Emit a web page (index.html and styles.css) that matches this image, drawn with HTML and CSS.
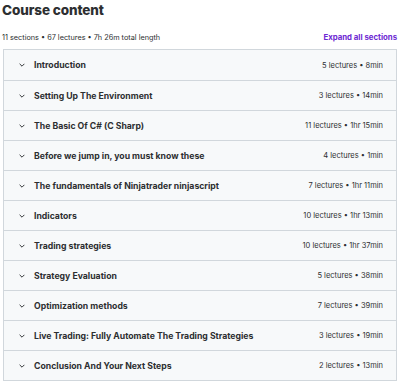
FILE: index.html
```html
<!DOCTYPE html>
<html lang="en">
	<head>
		<meta charset="utf-8">
		<title>Course content</title>
		<link rel="stylesheet" href="styles.css">
	</head>
	<body>
		<div id="curriculum">
			<h2 class="heading">Course content</h2>
			<div class="summary">
				<span>11 sections &bull; 67 lectures &bull; 7h 26m total length</span>
				<button class="expand-all">Expand all sections</button>
			</div>

			<div class="sections">
				<div class="section">
					<span class="chevron"><svg viewBox="0 0 10 6" width="6" height="4"><path d="M1 1l4 4 4-4" fill="none" stroke="currentColor" stroke-width="1.6"/></svg></span>
					<span class="section-title">Introduction</span>
					<span class="section-meta">5 lectures &bull; 8min</span>
				</div>
				<div class="section">
					<span class="chevron"><svg viewBox="0 0 10 6" width="6" height="4"><path d="M1 1l4 4 4-4" fill="none" stroke="currentColor" stroke-width="1.6"/></svg></span>
					<span class="section-title">Setting Up The Environment</span>
					<span class="section-meta">3 lectures &bull; 14min</span>
				</div>
				<div class="section">
					<span class="chevron"><svg viewBox="0 0 10 6" width="6" height="4"><path d="M1 1l4 4 4-4" fill="none" stroke="currentColor" stroke-width="1.6"/></svg></span>
					<span class="section-title">The Basic Of C# (C Sharp)</span>
					<span class="section-meta">11 lectures &bull; 1hr 15min</span>
				</div>
				<div class="section">
					<span class="chevron"><svg viewBox="0 0 10 6" width="6" height="4"><path d="M1 1l4 4 4-4" fill="none" stroke="currentColor" stroke-width="1.6"/></svg></span>
					<span class="section-title">Before we jump in, you must know these</span>
					<span class="section-meta">4 lectures &bull; 1min</span>
				</div>
				<div class="section">
					<span class="chevron"><svg viewBox="0 0 10 6" width="6" height="4"><path d="M1 1l4 4 4-4" fill="none" stroke="currentColor" stroke-width="1.6"/></svg></span>
					<span class="section-title">The fundamentals of Ninjatrader ninjascript</span>
					<span class="section-meta">7 lectures &bull; 1hr 11min</span>
				</div>
				<div class="section">
					<span class="chevron"><svg viewBox="0 0 10 6" width="6" height="4"><path d="M1 1l4 4 4-4" fill="none" stroke="currentColor" stroke-width="1.6"/></svg></span>
					<span class="section-title">Indicators</span>
					<span class="section-meta">10 lectures &bull; 1hr 13min</span>
				</div>
				<div class="section">
					<span class="chevron"><svg viewBox="0 0 10 6" width="6" height="4"><path d="M1 1l4 4 4-4" fill="none" stroke="currentColor" stroke-width="1.6"/></svg></span>
					<span class="section-title">Trading strategies</span>
					<span class="section-meta">10 lectures &bull; 1hr 37min</span>
				</div>
				<div class="section">
					<span class="chevron"><svg viewBox="0 0 10 6" width="6" height="4"><path d="M1 1l4 4 4-4" fill="none" stroke="currentColor" stroke-width="1.6"/></svg></span>
					<span class="section-title">Strategy Evaluation</span>
					<span class="section-meta">5 lectures &bull; 38min</span>
				</div>
				<div class="section">
					<span class="chevron"><svg viewBox="0 0 10 6" width="6" height="4"><path d="M1 1l4 4 4-4" fill="none" stroke="currentColor" stroke-width="1.6"/></svg></span>
					<span class="section-title">Optimization methods</span>
					<span class="section-meta">7 lectures &bull; 39min</span>
				</div>
				<div class="section">
					<span class="chevron"><svg viewBox="0 0 10 6" width="6" height="4"><path d="M1 1l4 4 4-4" fill="none" stroke="currentColor" stroke-width="1.6"/></svg></span>
					<span class="section-title">Live Trading: Fully Automate The Trading Strategies</span>
					<span class="section-meta">3 lectures &bull; 19min</span>
				</div>
				<div class="section">
					<span class="chevron"><svg viewBox="0 0 10 6" width="6" height="4"><path d="M1 1l4 4 4-4" fill="none" stroke="currentColor" stroke-width="1.6"/></svg></span>
					<span class="section-title">Conclusion And Your Next Steps</span>
					<span class="section-meta">2 lectures &bull; 13min</span>
				</div>
			</div>
		</div>
	</body>
</html>
```

FILE: styles.css
```css
html, body {
	background: #ffffff;
	margin: 0;
}
body {
	font-family: Inter, "Noto Sans", sans-serif;
	color: #2d2f31;
}
#curriculum {
	padding: 0 3px 0 2px;
}
.heading {
	font-size: 13.5px;
	font-weight: 800;
	line-height: 20px;
	margin: 0;
	letter-spacing: -0.1px;
}
.summary {
	display: flex;
	justify-content: space-between;
	align-items: center;
	font-size: 7.3px;
	height: 20px;
	margin-top: 7px;
	padding-bottom: 2px;
}
.expand-all {
	background: none;
	border: 0;
	padding: 0;
	font-family: inherit;
	font-size: 7.8px;
	font-weight: 700;
	color: #6d28d2;
	cursor: pointer;
}
.sections {
	border: 1px solid #d1d7dc;
	margin-left: 1px;
}
.section {
	display: flex;
	align-items: center;
	height: 29px;
	background: #f7f9fa;
	border-top: 1px solid #d1d7dc;
	padding: 0 13px 0 15px;
}
.section:first-child {
	border-top: 0;
	height: 30px;
}
.chevron {
	display: flex;
	width: 6px;
	margin-right: 9px;
	color: #2d2f31;
}
.section-title {
	flex: 1;
	font-size: 8.7px;
	font-weight: 700;
}
.section-meta {
	font-size: 7.5px;
	color: #2d2f31;
}
```
